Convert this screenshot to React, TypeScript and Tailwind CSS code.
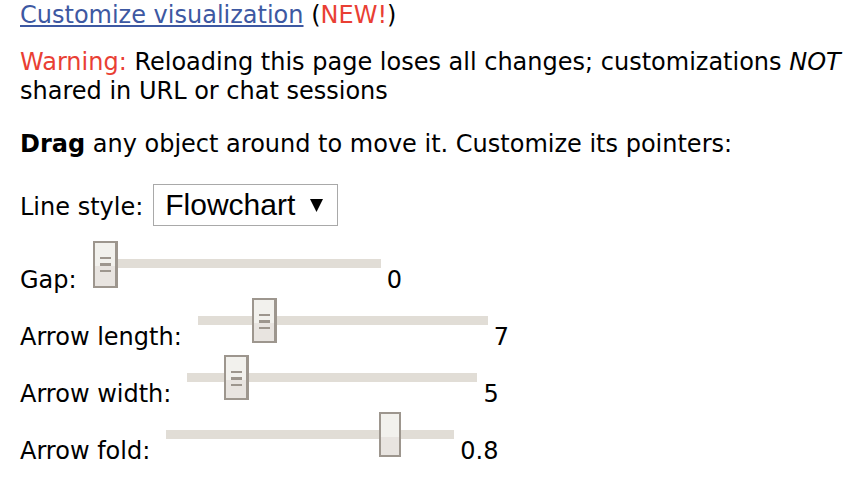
import { useState } from "react";

const sliderBase =
  "m-0 block h-[45px] shrink-0 cursor-pointer appearance-none self-start bg-transparent " +
  "[&::-webkit-slider-runnable-track]:h-[9px] [&::-webkit-slider-runnable-track]:bg-[#e1ddd6] " +
  "[&::-webkit-slider-thumb]:-mt-[18px] [&::-webkit-slider-thumb]:box-border [&::-webkit-slider-thumb]:appearance-none " +
  "[&::-webkit-slider-thumb]:border-2 [&::-webkit-slider-thumb]:border-solid [&::-webkit-slider-thumb]:border-[#9d968e]";

const gripThumb =
  "[&::-webkit-slider-thumb]:w-[25px] [&::-webkit-slider-thumb]:border-r-[3px] " +
  "[&::-webkit-slider-thumb]:[background:linear-gradient(#9d968e,#9d968e)_5px_14px/11px_2px_no-repeat,linear-gradient(#9d968e,#9d968e)_5px_20px/11px_3px_no-repeat,linear-gradient(#9d968e,#9d968e)_5px_27px/11px_2px_no-repeat,linear-gradient(#f2f1ed_23px,#e8e4e0_23px)]";

const plainThumb =
  "[&::-webkit-slider-thumb]:w-[22px] [&::-webkit-slider-thumb]:[background:linear-gradient(#f2f1ed_23px,#e8e4e0_23px)]";

type SliderProps = {
  id: string;
  label: string;
  initial: number;
  max: number;
  step?: number;
  look: string;
};

function SliderRow({ id, label, initial, max, step = 1, look }: SliderProps) {
  const [value, setValue] = useState(initial);
  return (
    <div className="flex h-[54px] items-end">
      <label htmlFor={id} className="mr-4 whitespace-nowrap">
        {label}
      </label>
      <input
        id={id}
        type="range"
        min={0}
        max={max}
        step={step}
        value={value}
        onChange={(e) => setValue(Number(e.target.value))}
        className={`${sliderBase} ${look}`}
      />
      <output htmlFor={id} className="ml-1.5">
        {value}
      </output>
    </div>
  );
}

export default function App() {
  const [lineStyle, setLineStyle] = useState("Flowchart");
  return (
    <main className="min-h-screen bg-white pt-px pl-5 font-['DejaVu_Sans',Verdana,sans-serif] text-[24px] leading-[29px] text-black">
      <p>
        <a href="#customize" className="text-[#3d58a2] underline decoration-2 underline-offset-2">
          Customize visualization
        </a>{" "}
        (<span className="text-[#e93f34]">NEW!</span>)
      </p>
      <p className="mt-[18px]">
        <span className="text-[#e93f34]">Warning:</span> Reloading this page loses all changes;
        customizations <i>NOT</i> shared in URL or chat sessions
      </p>
      <p className="mt-6">
        <b>Drag</b> any object around to move it. Customize its pointers:
      </p>
      <div className="mt-[25px] flex items-center gap-2.5">
        <label htmlFor="line-style" className="pt-1">
          Line style:
        </label>
        <div className="relative">
          <select
            id="line-style"
            value={lineStyle}
            onChange={(e) => setLineStyle(e.target.value)}
            className="block h-[42px] w-[185px] appearance-none border border-[#a9a9a9] bg-white pl-[11px] font-['Liberation_Sans',Arial,sans-serif] text-[30px] leading-[38px]"
          >
            <option>Flowchart</option>
            <option>Bezier</option>
            <option>Straight</option>
          </select>
          <svg
            viewBox="0 0 13 13"
            className="pointer-events-none absolute top-[15px] right-[15px] h-[13px] w-[13px]"
            aria-hidden="true"
          >
            <path d="M0 0h13L6.500 13z" />
          </svg>
        </div>
      </div>
      <div className="mt-[15px] space-y-[3px]">
        <SliderRow id="gap" label="Gap:" initial={0} max={35} look={`w-[288px] [&::-webkit-slider-thumb]:h-[47px] ${gripThumb}`} />
        <SliderRow id="arrow-length" label="Arrow length:" initial={7} max={34} look={`w-[290px] [&::-webkit-slider-thumb]:h-[45px] ${gripThumb}`} />
        <SliderRow id="arrow-width" label="Arrow width:" initial={5} max={36} look={`w-[290px] [&::-webkit-slider-thumb]:h-[45px] ${gripThumb}`} />
        <SliderRow id="arrow-fold" label="Arrow fold:" initial={0.8} max={1} step={0.1} look={`w-[288px] [&::-webkit-slider-thumb]:h-[45px] ${plainThumb}`} />
      </div>
    </main>
  );
}
